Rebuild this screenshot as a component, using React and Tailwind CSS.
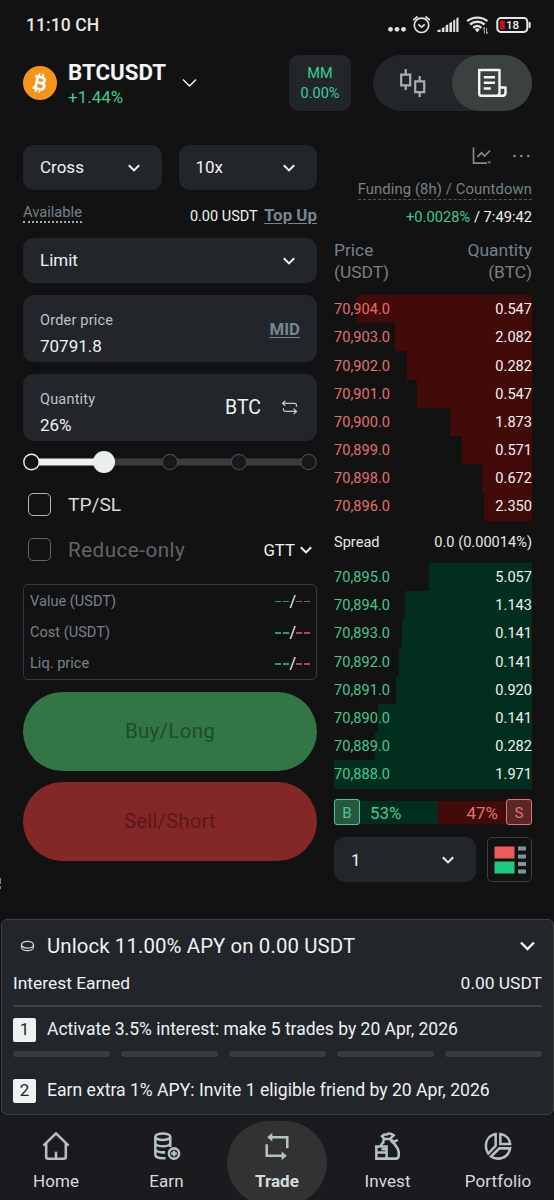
import clsx from "clsx";

const asks = [
  { price: "70,904.0", qty: "0.547", depth: 175 },
  { price: "70,903.0", qty: "2.082", depth: 137 },
  { price: "70,902.0", qty: "0.282", depth: 125.5 },
  { price: "70,901.0", qty: "0.547", depth: 115 },
  { price: "70,900.0", qty: "1.873", depth: 82 },
  { price: "70,899.0", qty: "0.571", depth: 70.5 },
  { price: "70,898.0", qty: "0.672", depth: 50.5 },
  { price: "70,896.0", qty: "2.350", depth: 48 },
];

const bids = [
  { price: "70,895.0", qty: "5.057", depth: 103.5 },
  { price: "70,894.0", qty: "1.143", depth: 127 },
  { price: "70,893.0", qty: "0.141", depth: 130 },
  { price: "70,892.0", qty: "0.141", depth: 133 },
  { price: "70,891.0", qty: "0.920", depth: 136 },
  { price: "70,890.0", qty: "0.141", depth: 154.5 },
  { price: "70,889.0", qty: "0.282", depth: 157.5 },
  { price: "70,888.0", qty: "1.971", depth: 198 },
];

const Chevron = ({ className = "w-3 h-2", width = 2 }) => (
  <svg viewBox="0 0 12 8" className={className} fill="none" stroke="#eef2f1" strokeWidth={width}>
    <path d="M0.8 1.2 6 6.4l5.2-5.2" />
  </svg>
);

const StatusBar = () => (
  <div className="h-[50px] pl-[26px] pr-[23px] flex items-center justify-between text-[#e6e6e6]">
    <span className="pt-px text-[17.5px] font-medium tracking-[0.1px]">11:10 CH</span>
    <div className="flex items-center">
      <svg width="144" height="20" viewBox="0 0 144 20" fill="none">
        {/* puntos */}
        <g fill="#e0e0e0">
          <circle cx="3.5" cy="14.3" r="2.4" />
          <circle cx="10" cy="14.3" r="2.4" />
          <circle cx="16.5" cy="14.3" r="2.4" />
        </g>
        {/* alarma */}
        <g stroke="#e0e0e0" strokeWidth="1.7">
          <circle cx="34.5" cy="10.3" r="7.2" />
          <path d="m31.3 9.3 3.2 2.8 3.2-2.8M26.2 5.2l4.4-3.7M42.8 5.2l-4.4-3.7" />
        </g>
        {/* cobertura */}
        <g fill="#e0e0e0">
          <path d="M50.5 17v-1.8l3-1V17zM54.8 17v-3.8l2.6-1.2v5zM58.6 17v-6.4l2.6-1.3V17zM62.4 17V8.2L65 6.8V17zM66.2 17V5.6l2-1V17zM69.3 17V3.4l2.2-1.4v15z" />
        </g>
        {/* wifi */}
        <g stroke="#e0e0e0" strokeWidth="2.4">
          <path d="M80.2 6.2c5.6-4.8 14.6-4.8 20.2 0" />
          <path d="M83 9.5c4.2-3.7 10.4-3.7 14.6 0" />
          <path d="M86.2 12.8c2.6-2.1 5.7-2.1 8.2 0" />
        </g>
        <path d="M87.8 14.3c1.5-1.3 3.5-1.3 5 0l-2.5 3.2z" fill="#e0e0e0" />
        <path d="M97.3 18.5v-6l-1.3 1.8M99.6 12.8v6l1.3-1.8" stroke="#bdbdbd" strokeWidth="0.9" />
        {/* bateria */}
        <rect x="110.3" y="3.1" width="30" height="13.8" rx="3.4" stroke="#e6e6e6" strokeWidth="2" />
        <rect x="112.8" y="5.6" width="5" height="8.8" rx="0.5" fill="#c4101c" />
        <path d="M142 7.5h1.2v5H142z" fill="#e6e6e6" stroke="#e6e6e6" strokeWidth="0.8" />
        <text x="119" y="14.1" fontSize="11.5" fontWeight="500" fill="#f2f2f2">
          18
        </text>
      </svg>
    </div>
  </div>
);

const BitcoinIcon = () => (
  <svg width="34" height="34" viewBox="0 0 34 34">
    <circle cx="17" cy="17" r="17" fill="#f7931a" />
    <g transform="rotate(13 17 17)" fill="none" stroke="#fff">
      <path d="M10.8 11.2h7c4.2 0 4.2 5.6 0 5.6h-4.3M13.5 16.8h5c4.6 0 4.6 6.2 0 6.2h-7.7M13.5 11.2V23" strokeWidth="2.6" />
      <path d="M14.6 7.5v3.2M18.3 7.5v3.2M14.6 23.5v3.2M18.3 23.5v3.2" strokeWidth="1.9" />
    </g>
  </svg>
);

const Header = () => (
  <div className="h-[66px] pl-[23px] pr-[22px] flex items-center">
    <BitcoinIcon />
    <div className="ml-[11px] pt-px w-[99px]">
      <p className="text-[22.3px] leading-[26px] font-bold text-[#f3f6f5]">BTCUSDT</p>
      <p className="text-[17px] leading-6 text-[#3ecb8c]">+1.44%</p>
    </div>
    <Chevron className="w-[17px] h-[10px] ml-[14px]" width={1.2} />
    <div className="ml-auto pt-[2px] w-[62px] h-14 rounded-[10px] bg-[#22262b] text-[#36cf91] text-[14.5px] leading-5 flex flex-col items-center justify-center text-center">
      <span>MM</span>
      <span>0.00%</span>
    </div>
    <div className="ml-[22px] w-[159px] h-14 rounded-full bg-[#22262b] flex">
      <div className="w-[79px] flex items-center justify-center">
        <svg width="28" height="30" viewBox="0 0 28 30" fill="none" stroke="#a9adb2" strokeWidth="2.2">
          <path d="M2.2 6.6h9v10.8h-9zM6.7 1v5.6M6.7 17.4V22M16.2 13.4h9v10.8h-9zM20.7 8v5.4M20.7 24.2V29" />
        </svg>
      </div>
      <div className="w-20 rounded-full bg-[#3a413f] flex items-center justify-center">
        <svg width="30" height="30" viewBox="0 0 30 30" fill="none" stroke="#f3f6f5" strokeWidth="2.4" strokeLinejoin="round">
          <path d="M22.5 19.5V2H2.2v23.5c0 1.5.8 2.3 2.3 2.3h21c2 0 3-1 3-3v-5.3h-6v5.3c0 2-1 3-3 3" />
          <path d="M6.8 9.2h11.2M6.8 14.8h11.2M6.8 20.5h7" />
        </svg>
      </div>
    </div>
  </div>
);

const Select = ({ label, className }) => (
  <div className={clsx("h-[45px] rounded-[11px] bg-[#22262b] pl-[17px] flex items-center justify-between text-[17px] text-[#eef2f1]", className)}>
    <span className="pt-px">{label}</span>
    <Chevron />
  </div>
);

const Slider = () => (
  <svg width="294" height="24" viewBox="0 0 294 24" className="-mt-px block">
    <path d="M8 12h73" stroke="#eef2f1" strokeWidth="7" />
    <path d="M81 12h205" stroke="#373c40" strokeWidth="7" />
    <circle cx="8.5" cy="12" r="7.7" fill="#121212" stroke="#eef2f1" strokeWidth="1.4" />
    <circle cx="147" cy="12" r="7.7" fill="#16181a" stroke="#43484c" strokeWidth="1.2" />
    <circle cx="216" cy="12" r="7.7" fill="#16181a" stroke="#43484c" strokeWidth="1.2" />
    <circle cx="285.5" cy="12" r="7.7" fill="#16181a" stroke="#43484c" strokeWidth="1.2" />
    <circle cx="81" cy="12" r="11" fill="#eaeeed" />
  </svg>
);

const SummaryRow = ({ label }) => (
  <div className="flex items-center justify-between h-[31.3px] pt-[2px]">
    <span className="text-[#75828a] text-[14.6px]">{label}</span>
    <span className="text-[16px] flex items-center">
      <i className="w-[6px] h-[1.5px] bg-[#2f9a6c]" />
      <i className="w-[6px] h-[1.5px] bg-[#2f9a6c] ml-[2px]" />
      <span className="text-[#eef2f1]">/</span>
      <i className="w-[6px] h-[1.5px] bg-[#a05256]" />
      <i className="w-[6px] h-[1.5px] bg-[#a05256] ml-[2px]" />
    </span>
  </div>
);

const OrderForm = () => (
  <div className="w-[294px]">
    <div className="flex gap-[17px]">
      <Select label="Cross" className="flex-1 pr-[22px]" />
      <Select label="10x" className="flex-1 pr-[22px]" />
    </div>
    <div className="h-12 flex justify-between">
      <span className="mt-[11px] h-[22px] leading-[22px] text-[14.7px] text-[#75828a] border-b-2 border-dotted border-[#a5a9aa]">Available</span>
      <p className="pt-[15px] leading-5 text-[14.5px] text-[#eef2f1]">
        0.00 USDT{" "}
        <span className="ml-[3px] text-[16.9px] font-bold underline underline-offset-2 text-[#75878c]">Top Up</span>
      </p>
    </div>
    <Select label="Limit" className="pr-[22px]" />

    <div className="mt-3 h-[67px] rounded-[11px] bg-[#22262b] px-[17px] flex items-center justify-between">
      <div className="pt-[11px]">
        <p className="text-[14.5px] leading-[25px] tracking-[0.2px] text-[#bcc3c7]">Order price</p>
        <p className="text-[17px] leading-[27px] text-[#eef2f1]">70791.8</p>
      </div>
      <span className="pt-[2px] text-[16.8px] font-bold underline underline-offset-2 text-[#75878c]">MID</span>
    </div>
    <div className="mt-3 h-[67px] rounded-[11px] bg-[#22262b] pl-[17px] pr-[19px] flex items-center justify-between">
      <div className="pt-[11px]">
        <p className="text-[14.5px] leading-[25px] tracking-[0.2px] text-[#bcc3c7]">Quantity</p>
        <p className="text-[17px] leading-[27px] text-[#eef2f1]">26%</p>
      </div>
      <div className="flex items-center gap-5">
        <span className="pt-px text-[19.5px] text-[#eef2f1]">BTC</span>
        <svg width="17" height="15" viewBox="0 0 17 15" fill="none" stroke="#c3c9cb" strokeWidth="1.2">
          <path d="M4.3 0.8 1.5 3.3l2.8 2.5M1.5 3.3h12c1.3 0 2 .7 2 2v1.5M12.7 8.8l2.8 2.6-2.8 2.6M15.5 11.4h-11c-1.3 0-2-.7-2-2V8.3" />
        </svg>
      </div>
    </div>

    <div className="pt-[10px]">
      <Slider />
    </div>

    <div className="mt-2 h-[45px] pl-[5px] flex items-center">
      <div className="w-[23px] h-[23px] rounded-[5px] border-[1.5px] border-[#aeb8bb]" />
      <span className="ml-[17px] pt-[2px] text-[19.2px] text-[#d7dcdd]">TP/SL</span>
    </div>
    <div className="h-[45px] pl-[5px] pr-[5px] flex items-center">
      <div className="w-[23px] h-[23px] rounded-[5px] border-[1.5px] border-[#5e6467]" />
      <span className="ml-[17px] pt-[2px] text-[20.6px] tracking-[0.5px] text-[#606569]">Reduce-only</span>
      <span className="ml-auto mr-[5px] pt-[2px] text-[16.8px] text-[#eef2f1]">GTT</span>
      <Chevron />
    </div>

    <div className="mt-3 h-24 rounded-[5px] border-[1.5px] border-[#34393d] px-[6px]">
      <SummaryRow label="Value (USDT)" />
      <SummaryRow label="Cost (USDT)" />
      <SummaryRow label="Liq. price" />
    </div>

    <button className="mt-3 block w-full h-[79px] rounded-full bg-[#337645] text-[#1b4d2c] text-[20.5px] tracking-[0.3px]">Buy/Long</button>
    <button className="mt-[11px] block w-full h-[79px] rounded-full bg-[#842827] text-[#561a1c] text-[20.3px] tracking-[0.2px]">Sell/Short</button>
  </div>
);

const BookRow = ({ row, side }) => (
  <div className="relative h-[28.2px] flex items-center justify-between text-[14.6px]">
    <div
      className={clsx("absolute right-0 top-0 h-[28.3px]", side === "ask" ? "bg-[#420b09]" : "bg-[#022e20]")}
      style={{ width: row.depth }}
    />
    <span className={clsx("relative pt-[2px]", side === "ask" ? "text-[#e2706f]" : "text-[#43c98c]")}>{row.price}</span>
    <span className="relative pt-[2px] text-[#eef2f1]">{row.qty}</span>
  </div>
);

const OrderBook = () => (
  <div className="w-[198px]">
    <div className="h-[22px] flex items-center justify-end gap-[20px]">
      <svg width="20" height="18" viewBox="0 0 20 18" fill="none" stroke="#84898c" strokeWidth="1.7">
        <path d="M1.5 0.5v15.7h13.5M5.5 9.8l4-4 3.2 3.2 5.3-5.5" />
        <path d="M15.2 14.5h4l-2 2.3z" fill="#84898c" stroke="none" />
      </svg>
      <svg width="20" height="4" viewBox="0 0 20 4" fill="#84898c">
        <circle cx="2.5" cy="2" r="1.3" />
        <circle cx="9.3" cy="2" r="1.3" />
        <circle cx="16.3" cy="2" r="1.3" />
      </svg>
    </div>
    <div className="mt-[11px] h-[22px] flex justify-end">
      <span className="h-[22px] leading-[22px] whitespace-nowrap text-[14.8px] tracking-[0.1px] text-[#75828a] border-b border-dashed border-[#4a565c]">
        Funding (8h) / Countdown
      </span>
    </div>
    <p className="mt-[7px] h-5 leading-5 text-right text-[14.7px] text-[#eef2f1]">
      <span className="text-[#3ecb8c]">+0.0028%</span> / 7:49:42
    </p>
    <div className="mt-[12px] h-[56px] flex justify-between text-[17.4px] leading-[22px] text-[#75828a]">
      <p>
        Price
        <br />
        (USDT)
      </p>
      <p className="text-right">
        Quantity
        <br />
        (BTC)
      </p>
    </div>
    {asks.map((row) => (
      <BookRow key={row.price} row={row} side="ask" />
    ))}
    <div className="h-[42.4px] pt-[2px] flex items-center justify-between text-[14.6px] text-[#e3e7e8]">
      <span>Spread</span>
      <span>0.0 (0.00014%)</span>
    </div>
    {bids.map((row) => (
      <BookRow key={row.price} row={row} side="bid" />
    ))}

    {/* Compradores vs vendedores */}
    <div className="mt-[11px] h-[26px] flex items-center text-[17px]">
      <span className="w-[26px] h-[26px] pt-px rounded-[3px] border-[1.5px] border-[#43c98c] bg-[#27573f] text-[#43c98c] text-[15px] flex items-center justify-center">B</span>
      <div className="w-[78px] h-[23px] pt-[2px] bg-[#022e20] text-[#43c98c] flex items-center pl-[10px]">53%</div>
      <div className="w-[68px] h-[23px] pt-[2px] bg-[#420b09] text-[#e2706f] flex items-center justify-end pr-[8px]">47%</div>
      <span className="w-[26px] h-[26px] pt-px rounded-[3px] border-[1.5px] border-[#e2706f] bg-[#5b2626] text-[#e2706f] text-[15px] flex items-center justify-center">S</span>
    </div>
    <div className="mt-3 flex justify-between">
      <Select label="1" className="w-[142px] pr-[22px]" />
      <div className="w-[45px] h-[45px] rounded-[5px] border-[1.5px] border-[#3a3f43] flex items-center justify-center">
        <svg width="32" height="28" viewBox="0 0 32 28">
          <path d="M0.5 0.5h20v12h-20z" fill="#f05a5c" />
          <path d="M0.5 15.5h20v12h-20z" fill="#1fcb81" />
          <path d="M24 0.5h8v4h-8zM24 8.5h8v4h-8zM24 16h8v4h-8zM24 23.5h8v4h-8z" fill="#83939a" />
        </svg>
      </div>
    </div>
  </div>
);

const StepBadge = ({ n }) => (
  <span className="w-[23px] h-6 rounded-[2px] bg-[#eef2f1] text-[#22262b] text-[17px] flex items-center justify-center">{n}</span>
);

const EarnCard = () => (
  <div className="w-[553px] ml-px h-[196px] shrink-0 rounded-md border-[1.5px] border-[#3b4145] bg-[#22262b] px-[11px] text-[#eef2f1]">
    <div className="mt-[6px] h-10 flex items-center pl-[7px] pr-[7px]">
      <svg width="15" height="12" viewBox="0 0 15 12" fill="none" stroke="#d5dadb" strokeWidth="1.2">
        <ellipse cx="7.5" cy="4.7" rx="6" ry="3.4" />
        <path d="M1.5 4.7v2.6c0 1.9 2.7 3.4 6 3.4s6-1.5 6-3.4V4.7" />
      </svg>
      <span className="ml-[12px] text-[20.4px] tracking-[0.1px]">Unlock 11.00% APY on 0.00 USDT</span>
      <Chevron className="w-[15px] h-[10px] ml-auto" width={1.9} />
    </div>
    <div className="h-[34px] flex items-center justify-between text-[17.4px]">
      <span>Interest Earned</span>
      <span>0.00 USDT</span>
    </div>
    <div className="mt-[5px] h-[1.5px] bg-[#3b4145]" />
    <div className="mt-[11px] h-6 flex items-center gap-[11px] text-[17.5px]">
      <StepBadge n="1" />
      <span>Activate 3.5% interest: make 5 trades by 20 Apr, 2026</span>
    </div>
    <div className="mt-[9px] flex gap-[11px]">
      {[1, 2, 3, 4, 5].map((i) => (
        <div key={i} className="flex-1 h-[6px] rounded-full bg-[#373c40]" />
      ))}
    </div>
    <div className="mt-[22px] h-6 flex items-center gap-[11px] text-[17.6px]">
      <StepBadge n="2" />
      <span>Earn extra 1% APY: Invite 1 eligible friend by 20 Apr, 2026</span>
    </div>
  </div>
);

const navItems = [
  {
    label: "Home",
    icon: (
      <>
        <path d="M1.5 14.5 15 1.5l13.5 13" />
        <path d="M4.5 12v14.5c0 1.5.8 2.2 2.2 2.2h16.6c1.4 0 2.2-.7 2.2-2.2V12M15 28.5v-7.5" />
      </>
    ),
  },
  {
    label: "Earn",
    icon: (
      <>
        <ellipse cx="10.5" cy="5" rx="8" ry="3.5" />
        <path d="M2.5 5v19c0 2.5 3.6 4 8 4h3M18.5 5v11M2.5 11.5c0 2.3 3.6 3.8 8 3.8s8-1.5 8-3.8M2.5 18c0 2.3 3.6 3.8 8 3.8h2.5" />
        <circle cx="22.5" cy="23" r="5.5" />
        <path d="M22.5 20v6M19.5 23h6" />
      </>
    ),
  },
  {
    label: "Trade",
    icon: (
      <>
        <path d="M8 5.5h18v12M4 13v12.500h18" />
        <path d="M10 0.8 4.5 5.500l5.500 4.700zM20 20.800l5.500 4.700-5.500 4.700z" fill="#b5c2c5" stroke="none" />
      </>
    ),
  },
  {
    label: "Invest",
    icon: (
      <>
        <path d="M11.5 7.5 8.5 4.5c2.5-3.3 4.5-1 5.5-2 1-1 3.5-1.5 7 1l-4 4h-6l-1.5 3M17 7.5l4.5 3 4-2" />
        <path d="M11 10.5c-2 1-3.2 2.5-4 4.5M18 9c6 5 9.5 11 8.5 16.5-.3 2-1.5 3-3 3H14" />
        <path d="M2.5 15.5h11v13h-11zM2.5 22h11M13.5 18.5H8" />
      </>
    ),
  },
  {
    label: "Portfolio",
    icon: (
      <>
        <path d="M12.5 2.2C5.5 3.5 2 9 2 15c0 3.5 1 6 2.5 8l8-8.3z" />
        <path d="M17.5 2.2c6 .8 9.8 5.3 10.5 10.5H17.5z" />
        <path d="M28 17.5H16.5L7.5 26.2c2 1.5 4.5 2.3 7.5 2.3 7 0 12-4.5 13-11z" />
      </>
    ),
  },
];

const BottomNav = () => (
  <nav className="h-[85px] bg-[#1b1a1f] flex justify-center gap-[11px] overflow-hidden">
    {navItems.map((item) => (
      <div
        key={item.label}
        className={clsx(
          "mt-[6px] w-[99.5px] h-[84px] shrink-0 rounded-[44px] flex flex-col items-center pt-[11px]",
          item.label === "Trade" && "bg-[#323232]"
        )}
      >
        <svg width="28" height="29" viewBox="0 0 30 31" fill="none" stroke="#b5c2c5" strokeWidth="2.7">
          {item.icon}
        </svg>
        <span
          className={clsx(
            "mt-[8px] text-[17px] leading-6 text-[#d5dcde]",
            item.label === "Trade" ? "font-bold" : "tracking-[0.1px]"
          )}
        >
          {item.label}
        </span>
      </div>
    ))}
  </nav>
);

const App = () => {
  return (
    <div className="relative w-[554px] h-[1200px] bg-[#121212] overflow-hidden flex flex-col font-[Roboto,'Noto_Sans',sans-serif]">
      <StatusBar />
      <Header />
      <main className="pt-[29px] pl-[23px] h-[803px] flex gap-[17px] shrink-0">
        <OrderForm />
        <OrderBook />
      </main>
      {/* borde de la pestaña oculta */}
      <div className="absolute left-0 top-[878px] flex flex-col gap-[2px]">
        <i className="w-px h-[6px] bg-[#75828a]" />
        <i className="w-px h-[3px] bg-[#75828a]" />
      </div>
      <EarnCard />
      <BottomNav />
    </div>
  );
};

export default App;
